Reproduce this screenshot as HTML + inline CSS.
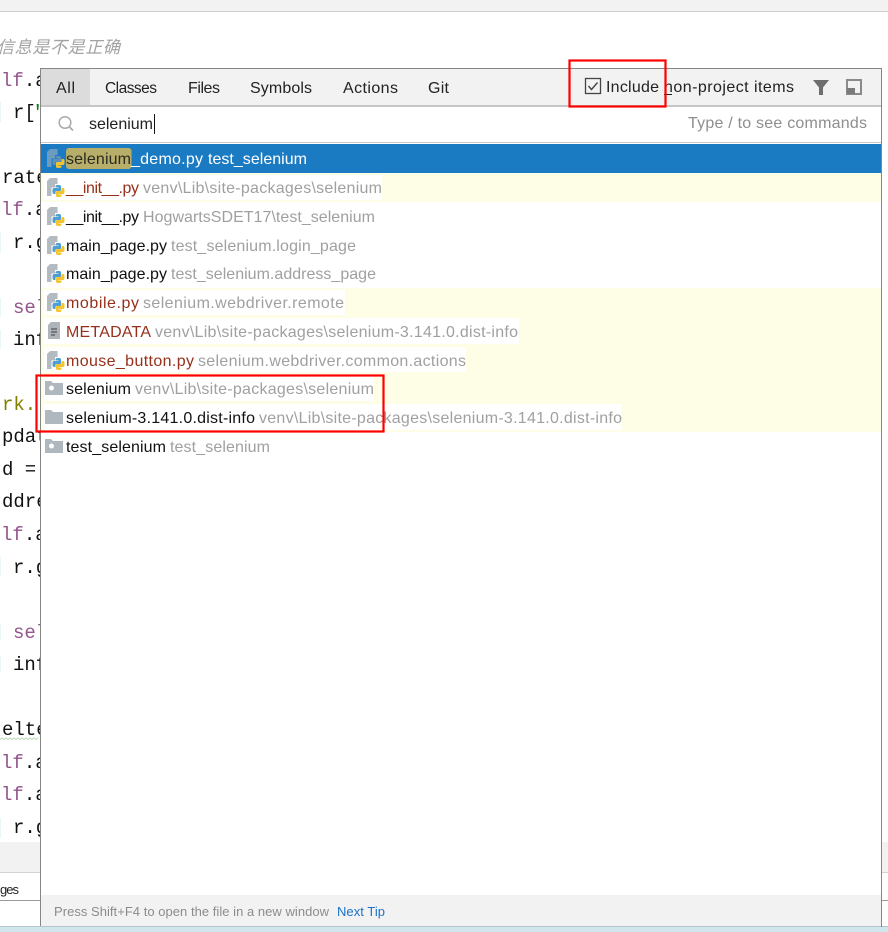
<!DOCTYPE html>
<html><head><meta charset="utf-8"><style>
html,body{margin:0;padding:0;background:#fff;width:888px;height:932px;overflow:hidden}
svg{display:block}
text{font-family:"Liberation Sans","Noto Sans CJK SC",sans-serif;font-size:16px;white-space:pre}
.c{font-family:"Liberation Mono",monospace;font-size:19px;fill:#111}
.p{fill:#94558d}
.g{fill:#a0a0a0}
.r{fill:#97301a}
.k{fill:#111}
.t{fill:#222}
</style></head><body>
<svg width="888" height="932" viewBox="0 0 888 932" xmlns="http://www.w3.org/2000/svg">
<defs>
<g id="py">
<path d="M3 0H10.500V6H8V9.500H4.500V18H0V3z" fill="#b4bbc0"/>
<path d="M8.500 8.500q0-1.500 2-1.500h1.500q2 0 2 1.500V12q0 1-1 1H9.500q-1 0-1 1v2H7q-1.500 0-1.500-2.500v-1q0-2.500 1.500-2.500h4.500v-.5H8.500z" fill="#4d9fd3"/>
<path d="M8.500 8.500q0-1.500 2-1.500h1.500q2 0 2 1.500V12q0 1-1 1H9.500q-1 0-1 1v2H7q-1.500 0-1.500-2.500v-1q0-2.500 1.500-2.500h4.500v-.5H8.500z" fill="#f3c42f" transform="rotate(180 11.500 13)"/>
</g>
<g id="py1">
<path d="M3 0H10.500V6H8V9.500H4.500V18H0V3z" fill="#6b9cc0"/>
<path d="M8.500 8.500q0-1.500 2-1.500h1.500q2 0 2 1.500V12q0 1-1 1H9.500q-1 0-1 1v2H7q-1.500 0-1.500-2.500v-1q0-2.500 1.500-2.500h4.500v-.5H8.500z" fill="#5c90b8"/>
<path d="M8.500 8.500q0-1.500 2-1.500h1.500q2 0 2 1.500V12q0 1-1 1H9.500q-1 0-1 1v2H7q-1.500 0-1.500-2.500v-1q0-2.500 1.500-2.500h4.500v-.5H8.500z" fill="#f3c42f" transform="rotate(180 11.500 13)"/>
</g>
<g id="fd"><path d="M0 1h6l2 2h10v12H0z" fill="#afb8bf"/></g>
<g id="pk"><path d="M0 1h6l2 2h10v12H0z" fill="#afb8bf"/><circle cx="6.500" cy="8" r="2.500" fill="#fff"/></g>
<clipPath id="cl"><rect x="0" y="0" width="40" height="932"/></clipPath>
</defs>

<rect width="888" height="932" fill="#fff"/>
<rect width="888" height="11" fill="#f2f2f2"/>
<rect y="11" width="888" height="1" fill="#cfcfcf"/>

<text x="-3" y="53" style="font-style:italic;font-size:17px;fill:#a3a3a3" textLength="123">信息是不是正确</text>

<g clip-path="url(#cl)">
<rect x="0" y="102" width="1" height="20" fill="#e8f8f9"/>
<rect x="0" y="232" width="1" height="20" fill="#e8f8f9"/>
<rect x="0" y="298" width="1" height="18" fill="#e8f8f9"/>
<rect x="0" y="330" width="1" height="18" fill="#e8f8f9"/>
<rect x="0" y="557" width="1" height="20" fill="#e8f8f9"/>
<rect x="0" y="623" width="1" height="18" fill="#e8f8f9"/>
<rect x="0" y="655" width="1" height="18" fill="#e8f8f9"/>
<rect x="0" y="818" width="1" height="20" fill="#e8f8f9"/>
<text class="c" x="1" y="86"><tspan class="p">lf</tspan>.a</text>
<text class="c" x="13" y="118">r[</text>
<text class="c" x="32" y="118" style="fill:#067d17">'</text>
<text class="c" x="2" y="183">rate</text>
<text class="c" x="1" y="215"><tspan class="p">lf</tspan>.a</text>
<text class="c" x="13" y="248">r.g</text>
<text class="c p" x="13" y="313">sel</text>
<text class="c" x="13" y="345">inf</text>
<text class="c" x="2" y="410" style="fill:#808000">rk.</text>
<text class="c" x="2" y="442">pdat</text>
<text class="c" x="2" y="475">d =</text>
<text class="c" x="2" y="507">ddre</text>
<text class="c" x="1" y="540"><tspan class="p">lf</tspan>.a</text>
<text class="c" x="13" y="573">r.g</text>
<text class="c p" x="13" y="638">sel</text>
<text class="c" x="13" y="670">inf</text>
<text class="c" x="2" y="735">elte</text>
<path d="M0 739.500l2-1.500 2 1.500 2-1.500 2 1.500 2-1.500 2 1.500 2-1.500 2 1.500 2-1.500 2 1.500 2-1.500 2 1.500 2-1.500 2 1.500 2-1.500 2 1.500 2-1.500 2 1.500 2-1.500" fill="none" stroke="#b7dcb2" stroke-width="1"/>
<text class="c" x="1" y="768"><tspan class="p">lf</tspan>.a</text>
<text class="c" x="1" y="800"><tspan class="p">lf</tspan>.a</text>
<text class="c" x="13" y="833">r.g</text>
</g>

<rect x="0" y="842" width="888" height="30" fill="#f2f2f2"/>
<rect x="0" y="872" width="888" height="1" fill="#d2d2d2"/>
<rect x="0" y="900" width="888" height="1" fill="#9a9a9a"/>
<text x="0" y="894" style="font-size:13px;fill:#222" textLength="19">ges</text>
<rect x="0" y="926" width="888" height="1" fill="#b5c5c9"/>
<rect x="0" y="927" width="888" height="5" fill="#cfe7ec"/>

<!-- popup -->
<rect x="41" y="69" width="840" height="857" fill="#fff"/>
<rect x="41" y="69" width="840" height="36" fill="#f2f2f2"/>
<rect x="41" y="69" width="49" height="36" fill="#dcdcdc"/>
<rect x="41" y="105" width="840" height="2" fill="#c6c6c6"/>
<rect x="41" y="142" width="840" height="1" fill="#c9c9c9"/>
<rect x="41" y="895" width="840" height="31" fill="#f2f2f2"/>
<rect x="40" y="68" width="842" height="1" fill="#868686"/>
<rect x="40" y="68" width="1" height="858" fill="#868686"/>
<rect x="881" y="68" width="1" height="859" fill="#868686"/>

<text class="t" x="56" y="93" textLength="19">All</text>
<text class="t" x="105" y="93" textLength="52" style="font-size:15.5px">Classes</text>
<text class="t" x="188" y="93" textLength="32">Files</text>
<text class="t" x="250" y="93" textLength="62">Symbols</text>
<text class="t" x="343" y="93" textLength="55">Actions</text>
<text class="t" x="428" y="93" textLength="21">Git</text>

<rect x="585.500" y="78.500" width="15" height="15" fill="none" stroke="#444" stroke-width="1.300"/>
<path d="M588.500 86l3 3.500 6-7" fill="none" stroke="#444" stroke-width="1.400"/>
<text class="t" x="606" y="92" textLength="53">Include</text>
<text class="t" x="664" y="92" textLength="130">non-project items</text>
<rect x="664" y="94" width="8" height="1" fill="#222"/>

<path d="M813 80h16l-6 7.500V95h-4v-7.500z" fill="#6e6e6e"/>
<rect x="847" y="80" width="14" height="14" fill="none" stroke="#8a8a8a" stroke-width="2"/>
<rect x="847" y="88" width="8" height="6" fill="#7a7a7a"/>

<circle cx="65" cy="122.500" r="5.800" fill="none" stroke="#aaa" stroke-width="1.500"/>
<path d="M69.500 127l3.500 3.500" stroke="#aaa" stroke-width="1.700"/>
<text class="t" x="89" y="129" textLength="64">selenium</text>
<rect x="154" y="114" width="1" height="20" fill="#111"/>
<text x="688" y="128" style="fill:#8e8e8e" textLength="179">Type / to see commands</text>

<!-- rows -->
<rect x="41" y="144" width="840" height="29" fill="#1b7bc2"/>
<rect x="41" y="173" width="840" height="29" fill="#fefee6"/>
<rect x="41" y="288" width="840" height="144" fill="#fefee6"/>
<rect x="44" y="175" width="338" height="25" fill="#fff"/>
<rect x="44" y="290" width="301" height="25" fill="#fff"/>
<rect x="44" y="318" width="475" height="26" fill="#fff"/>
<rect x="44" y="347" width="422" height="25" fill="#fff"/>
<rect x="44" y="376" width="330" height="25" fill="#fff"/>
<rect x="44" y="404" width="578" height="26" fill="#fff"/>

<rect x="66" y="148" width="65.500" height="21" rx="3" fill="#b7ae6a"/>
<text x="66" y="164" style="fill:#2a2a20" textLength="65">selenium</text>
<text x="131" y="164" style="fill:#fff" textLength="72">_demo.py</text>
<text x="208" y="164" style="fill:#fff" textLength="99">test_selenium</text>

<text class="r" x="66" y="193" textLength="73">__init__.py</text>
<text class="g" x="143" y="193" textLength="239">venv\Lib\site-packages\selenium</text>

<text class="k" x="66" y="222" textLength="73">__init__.py</text>
<text class="g" x="143" y="222" textLength="232">HogwartsSDET17\test_selenium</text>

<text class="k" x="66" y="251" textLength="101">main_page.py</text>
<text class="g" x="171" y="251" textLength="185">test_selenium.login_page</text>

<text class="k" x="66" y="279" textLength="101">main_page.py</text>
<text class="g" x="171" y="279" textLength="205">test_selenium.address_page</text>

<text class="r" x="66" y="308" textLength="73">mobile.py</text>
<text class="g" x="143" y="308" textLength="201">selenium.webdriver.remote</text>

<text class="r" x="66" y="337" textLength="85">METADATA</text>
<text class="g" x="155" y="337" textLength="363">venv\Lib\site-packages\selenium-3.141.0.dist-info</text>

<text class="r" x="66" y="366" textLength="128">mouse_button.py</text>
<text class="g" x="198" y="366" textLength="268">selenium.webdriver.common.actions</text>

<text class="k" x="66" y="394" textLength="65">selenium</text>
<text class="g" x="135" y="394" textLength="239">venv\Lib\site-packages\selenium</text>

<text class="k" x="66" y="423" textLength="189">selenium-3.141.0.dist-info</text>
<text class="g" x="259" y="423" textLength="363">venv\Lib\site-packages\selenium-3.141.0.dist-info</text>

<text class="k" x="66" y="452" textLength="100">test_selenium</text>
<text class="g" x="170" y="452" textLength="100">test_selenium</text>

<!-- icons -->
<use href="#py1" x="47" y="149"/>
<use href="#py" x="47" y="178"/>
<use href="#py" x="47" y="207"/>
<use href="#py" x="47" y="236"/>
<use href="#py" x="47" y="264"/>
<use href="#py" x="47" y="293"/>
<g transform="translate(48 322)"><path d="M3 0h9v17H0V3z" fill="#adb5bb"/><path d="M3 7h6M3 10h6M3 13h4" stroke="#555" stroke-width="1.200"/></g>
<use href="#py" x="47" y="351"/>
<use href="#pk" x="45" y="380"/>
<use href="#fd" x="45" y="409"/>
<use href="#pk" x="45" y="438"/>

<text x="54" y="916" style="font-size:13px;fill:#8c8c8c" textLength="275">Press Shift+F4 to open the file in a new window</text>
<text x="337" y="916" style="font-size:13px;fill:#1a73c8" textLength="48">Next Tip</text>

<!-- annotations -->
<rect x="569.500" y="60.500" width="96" height="46" fill="none" stroke="#f00" stroke-width="2.200"/>
<rect x="36.500" y="375.500" width="347" height="56" fill="none" stroke="#f00" stroke-width="2.200"/>
</svg>
</body></html>
